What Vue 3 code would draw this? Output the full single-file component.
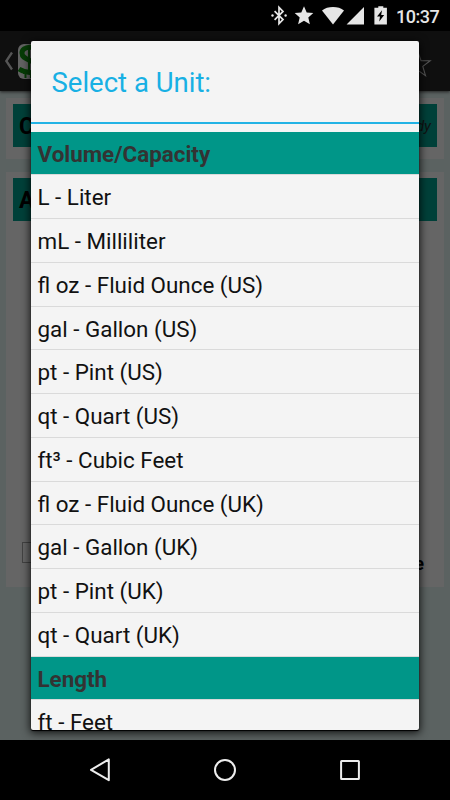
<script setup>
const rows = [
  { text: 'Volume/Capacity', header: true },
  { text: 'L - Liter' },
  { text: 'mL - Milliliter' },
  { text: 'fl oz - Fluid Ounce (US)' },
  { text: 'gal - Gallon (US)' },
  { text: 'pt - Pint (US)' },
  { text: 'qt - Quart (US)' },
  { text: 'ft³ - Cubic Feet' },
  { text: 'fl oz - Fluid Ounce (UK)' },
  { text: 'gal - Gallon (UK)' },
  { text: 'pt - Pint (UK)' },
  { text: 'qt - Quart (UK)' },
  { text: 'Length', header: true },
  { text: 'ft - Feet' },
]
</script>

<template>
  <div class="screen">
    <header class="status">
      <svg class="status-icons" width="118" height="31" viewBox="0 0 118 31">
        <g fill="none" stroke="#e6e6e6" stroke-width="1.7">
          <path d="M4.6 11.2l8.4 8.4-4 4V7.4l4 4-8.4 8.4" />
        </g>
        <g fill="#e6e6e6">
          <circle cx="2.5" cy="15.5" r="1.2" /><circle cx="15.6" cy="15.5" r="1.2" />
          <path d="M34 6.2l2.7 6.2 6.6.6-5 4.5 1.6 6.8-5.9-3.6-5.9 3.6 1.6-6.8-5-4.5 6.6-.6z" />
          <path d="M52 10.4C57.5 5.8 68.5 5.8 74 10.4L63 24.4z" />
          <path d="M94 7v17.6H76.6z" />
          <path fill-rule="evenodd" d="M108.3 6.2h5v1.6h3.6v16.8h-12.5V7.8h3.9zM112 10.3l-5 6.3h3l-.8 5 5-6.5h-3z" />
        </g>
      </svg>
      <span class="clock">10:37</span>
    </header>

    <main class="app">
      <div class="action-bar">
        <svg class="back" width="10" height="22" viewBox="0 0 10 22"><path d="M8 2.5L2.3 11 8 19.5" fill="none" stroke="#555" stroke-width="2.3" /></svg>
        <svg class="logo" width="32" height="35" viewBox="0 0 32 35">
          <rect width="32" height="35" rx="6" fill="#626262" />
          <path d="M24 8C18 1 4 2 4 9c0 5 5 6 9 8s9 3 9 7c0 6-13 6-21 1" fill="none" stroke="#063c06" stroke-width="5" />
          <path d="M11 1v29M5 29h5M7.5 29v5M13 29v5" fill="none" stroke="#063c06" stroke-width="2" />
        </svg>
        <svg class="favorite" width="28" height="28" viewBox="0 0 28 28"><path d="M14 2l3 8.7 9.2.1-7.4 5.6 2.7 9.2-7.5-5.2-7.5 5.2 2.7-9.2-7.4-5.6 9.2-.1z" fill="none" stroke="#555" stroke-width="1.1" /></svg>
      </div>
      <div class="cards">
        <section class="card">
          <div class="card-head"><b>C</b><i>Ready</i></div>
        </section>
        <section class="card tall">
          <div class="card-head"><b>A</b></div>
          <div class="options"><span class="check"></span><b>e</b></div>
        </section>
      </div>

      <div class="dialog">
        <h1 class="title">Select a Unit:</h1>
        <ul class="list">
          <li v-for="row in rows" :key="row.text" :class="['row', { header: row.header }]">{{ row.text }}</li>
        </ul>
      </div>
    </main>

    <nav class="nav">
      <svg width="24" height="26" viewBox="0 0 24 26"><path d="M20.8 2.4v20.8L3 12.8z" fill="none" stroke="#ededed" stroke-width="2" stroke-linejoin="round" /></svg>
      <svg width="24" height="26" viewBox="0 0 24 26"><circle cx="12" cy="13" r="10" fill="none" stroke="#ededed" stroke-width="2" /></svg>
      <svg width="24" height="26" viewBox="0 0 24 26"><rect x="3.1" y="4.1" width="17.8" height="17.8" rx=".5" fill="none" stroke="#ededed" stroke-width="2" /></svg>
    </nav>
  </div>
</template>

<style>
body { margin: 0; background: #000; }
</style>

<style scoped>
.screen {
  width: 450px;
  height: 800px;
  display: flex;
  flex-direction: column;
  overflow: hidden;
  background: #000;
  font-family: Roboto, sans-serif;
}
.status {
  height: 31px;
  flex: none;
  display: flex;
  justify-content: flex-end;
  align-items: flex-start;
  gap: 8px;
  padding-right: 10px;
  box-sizing: border-box;
}
.clock {
  width: 44px;
  color: #e6e6e6;
  font-size: 18px;
  font-weight: 500;
  line-height: 33px;
  white-space: nowrap;
  letter-spacing: -0.5px;
}
.app {
  position: relative;
  height: 709px;
  flex: none;
  background: #5b6261;
  overflow: hidden;
}
.action-bar {
  height: 60px;
  display: flex;
  align-items: center;
  background: #0f0f0f;
  box-sizing: border-box;
  padding: 0 18px 0 4px;
  box-shadow: 0 1px 3px #222;
}
.logo { margin-left: 4px; }
.favorite { margin-left: auto; margin-top: 6px; }
.cards {
  display: flex;
  flex-direction: column;
  gap: 13px;
  padding: 7px 6px 0;
}
.card {
  height: 61px;
  background: #656565;
  padding: 6px 7px 0;
  box-sizing: border-box;
}
.card.tall {
  height: 415px;
  display: flex;
  flex-direction: column;
}
.card-head {
  height: 43px;
  display: flex;
  align-items: center;
  justify-content: space-between;
  padding: 0 6px;
  background: #004039;
  color: #000;
  font-size: 23px;
}
.card-head b { padding-top: 2px; }
.card-head i { font-size: 15px; color: #111; }
.options {
  display: flex;
  justify-content: space-between;
  align-items: flex-end;
  margin-top: auto;
  padding: 0 13px 13px 9px;
  font-size: 18px;
  line-height: 21px;
}
.check {
  width: 20px;
  height: 21px;
  box-sizing: border-box;
  margin-bottom: 11px;
  border: 1px solid #424242;
}
.dialog {
  position: absolute;
  left: 31px;
  top: 10px;
  width: 388px;
  height: 689px;
  display: flex;
  flex-direction: column;
  overflow: hidden;
  border-radius: 2px;
  background: #f4f4f4;
  box-shadow: 0 1px 1px #000, 0 2px 9px 1px rgba(0, 0, 0, .8);
}
.title {
  height: 83px;
  flex: none;
  box-sizing: border-box;
  margin: 0 0 7.5px;
  padding-left: 20.5px;
  border-bottom: 2px solid #22b3e5;
  color: #18b0e4;
  font-size: 27.5px;
  font-weight: 400;
  line-height: 83px;
}
.list { list-style: none; margin: 0; padding: 0; }
.row {
  height: 43.75px;
  box-sizing: border-box;
  padding-left: 6.5px;
  border-bottom: 1px solid #dadada;
  color: #111;
  font-size: 22.4px;
  line-height: 45px;
  white-space: nowrap;
}
.row.header {
  background: #009688;
  background-clip: padding-box;
  color: #333;
  font-weight: 700;
}
.nav {
  height: 60px;
  flex: none;
  display: flex;
  align-items: center;
  justify-content: space-between;
  padding: 0 88px;
}
</style>
